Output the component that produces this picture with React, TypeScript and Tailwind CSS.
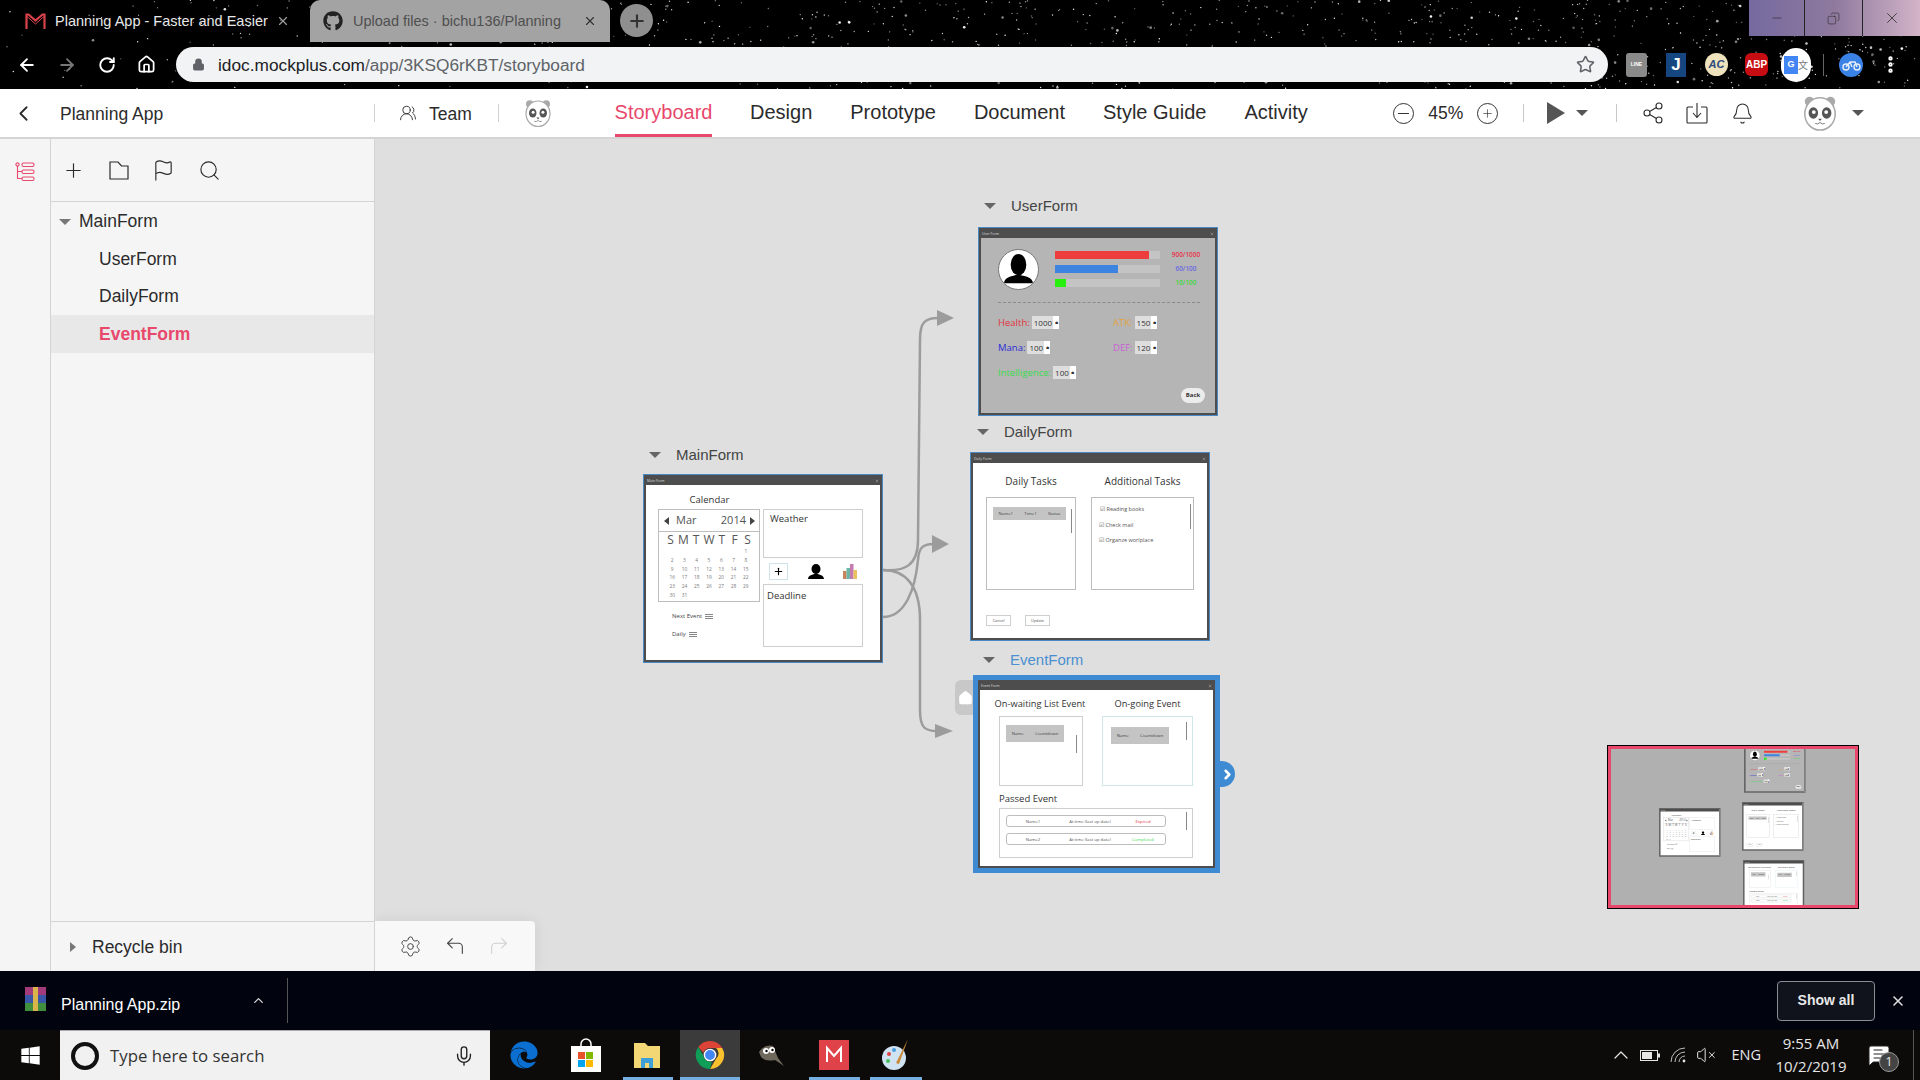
import type { ReactNode } from "react";
import {
  ArrowLeft,
  ArrowRight,
  Bell,
  ChevronLeft,
  ChevronRight,
  ChevronUp,
  CornerUpLeft,
  CornerUpRight,
  EllipsisVertical,
  Flag,
  House,
  Lock,
  MessageSquareText,
  Mic,
  Plus,
  RotateCw,
  Search,
  Settings,
  Share2,
  Star,
  Minus,
  VolumeX,
  X,
  Copy,
  UsersRound,
} from "lucide-react";
import { FaEdge, FaGithub, FaWindows } from "react-icons/fa";

// wallpaper specks behind the browser chrome, seeded so each shot is the same
const stars = (() => {
  let seed = 42;
  const rnd = () => {
    seed = (seed * 16807) % 2147483647;
    return seed / 2147483647;
  };
  return Array.from({ length: 1000 }, () => ({
    x: Math.pow(rnd(), 0.7) * 1920,
    y: rnd() * 89,
    r: rnd() < 0.1 ? 1.3 : 0.7,
    o: 0.35 + rnd() * 0.65,
  }));
})();

const navItems = ["Design", "Prototype", "Document", "Style Guide", "Activity"];
const calendarDays = [
  "", "", "", "", "", "", "1",
  "2", "3", "4", "5", "6", "7", "8",
  "9", "10", "11", "12", "13", "14", "15",
  "16", "17", "18", "19", "20", "21", "22",
  "23", "24", "25", "26", "27", "28", "29",
  "30", "31", "", "", "", "", "",
];

function Panda({ size }: { size: number }) {
  return (
    <svg width={size} height={size} viewBox="0 0 40 40">
      <circle cx="9" cy="8" r="5" fill="#a9a9a9" />
      <circle cx="31" cy="8" r="5" fill="#a9a9a9" />
      <ellipse cx="20" cy="21" rx="16" ry="17" fill="#fff" stroke="#a9a9a9" strokeWidth="1.6" />
      <ellipse cx="13" cy="20" rx="5" ry="6" fill="#555" />
      <ellipse cx="27" cy="20" rx="5" ry="6" fill="#555" />
      <circle cx="13.5" cy="19" r="2" fill="#fff" />
      <circle cx="26.5" cy="19" r="2" fill="#fff" />
      <path d="M18 26h4l-2 2.5z" fill="#555" />
      <path d="M15 31q2.5 1.500 5-1q2.500 2.500 5 1" fill="none" stroke="#777" strokeWidth="1" />
    </svg>
  );
}

function Caret({ className }: { className: string }) {
  return <span className={`block h-0 w-0 border-x-[6px] border-t-[6px] border-x-transparent ${className}`} />;
}

function ChromeLogo({ size }: { size: number }) {
  return (
    <svg width={size} height={size} viewBox="0 0 32 32">
      <path d="M16 1a15 15 0 0 1 13 7.500H16a7.500 7.500 0 0 0-7 5L3.500 7.500A15 15 0 0 1 16 1z" fill="#db4437" />
      <path d="M29 8.500A15 15 0 0 1 16 31l6.500-11a7.500 7.500 0 0 0 0-11.500z" fill="#fbc02d" />
      <path d="M16 31A15 15 0 0 1 3.500 7.500L9 17a7.500 7.500 0 0 0 9 6z" fill="#0f9d58" />
      <circle cx="16" cy="16" r="6" fill="#4285f4" stroke="#fff" strokeWidth="1.500" />
    </svg>
  );
}

function MailLogo() {
  return (
    <svg className="shrink-0" width="21" height="17" viewBox="0 0 21 17" fill="none" stroke="#d8434b" strokeWidth="2.200">
      <path d="M1.500 16V1.500h2l7 6 7-6h2V16" />
      <path d="M1.500 3l9 8 9-8" strokeWidth="1" />
    </svg>
  );
}

function ExtIcon({ children, className }: { children: ReactNode; className: string }) {
  return <span className={`flex shrink-0 items-center justify-center ${className}`}>{children}</span>;
}

function BrowserChrome() {
  return (
    <div className="relative h-[89px] shrink-0 overflow-hidden bg-black">
      <svg className="absolute inset-0" width="1920" height="89">
        {stars.map((s, i) => (
          <circle key={i} cx={s.x} cy={s.y} r={s.r} fill="#fff" opacity={s.o} />
        ))}
      </svg>
      <div className="relative flex h-[42px]">
        <div className="flex w-[310px] items-center pl-[25px] pr-[20px] text-[14.500px] text-[#e8e8e8]">
          <MailLogo />
          <span className="ml-[9px] flex-1 truncate pt-[1px]">Planning App - Faster and Easier</span>
          <X className="ml-[6px] h-[14px] w-[14px] text-[#9a9a9a]" />
        </div>
        <div className="flex w-[300px] items-center rounded-t-[10px] bg-[#a3a3a3] pl-[13px] pr-[13px] text-[14.500px] text-[#4f4f4f]">
          <FaGithub className="h-[20px] w-[20px] shrink-0 text-[#222]" />
          <span className="ml-[10px] flex-1 truncate pt-[1px]">Upload files · bichu136/Planning</span>
          <X className="ml-[4px] h-[14px] w-[14px] text-[#333]" />
        </div>
        <div className="ml-[10px] mt-[4px] flex h-[33px] w-[33px] items-center justify-center rounded-full bg-[#8f8f8f]">
          <Plus className="h-[20px] w-[20px] text-[#333]" strokeWidth={2.5} />
        </div>
        <div className="ml-auto flex h-[36px] w-[171px] bg-gradient-to-r from-[#75699f] via-[#8f7a9e] to-[#d3b4c8] text-[#222]">
          <div className="flex w-[56px] items-center justify-center border-r border-[#222]">
            <Minus className="h-[14px] w-[14px]" strokeWidth={1} />
          </div>
          <div className="flex w-[58px] items-center justify-center border-r border-[#222]">
            <Copy className="h-[13px] w-[13px] -scale-x-100" strokeWidth={1} />
          </div>
          <div className="flex flex-1 items-center justify-center">
            <X className="h-[18px] w-[18px]" strokeWidth={1} />
          </div>
        </div>
      </div>
      <div className="relative mt-[5px] flex h-[35px] items-center">
        <div className="flex w-[176px] items-center pl-[17px] text-white">
          <ArrowLeft className="h-[20px] w-[20px]" strokeWidth={2.2} />
          <ArrowRight className="ml-[20px] h-[20px] w-[20px] text-[#777]" strokeWidth={2.2} />
          <RotateCw className="ml-[21px] h-[18px] w-[18px]" strokeWidth={2.5} />
          <House className="ml-[21px] h-[19px] w-[19px]" strokeWidth={2.2} />
        </div>
        <div className="flex h-[35px] w-[1432px] items-center rounded-full bg-[#f1f3f4] pl-[16px] pr-[13px] text-[17.300px] text-[#5f6368]">
          <Lock className="h-[13px] w-[13px] fill-[#5f6368]" />
          <span className="ml-[13px] pt-[2px]">
            <span className="text-[#202124]">idoc.mockplus.com</span>/app/3KSQ6rKBT/storyboard
          </span>
          <Star className="ml-auto h-[19px] w-[19px] text-[#5f6368]" strokeWidth={2} />
        </div>
        <div className="ml-[18px] flex items-center">
          <ExtIcon className="h-[24px] w-[21px] rounded-[3px] bg-[#8a8a8a] text-[5px] font-bold text-white">LINE</ExtIcon>
          <ExtIcon className="ml-[19px] h-[24px] w-[20px] bg-[#15467f] text-[17px] font-bold text-white">J</ExtIcon>
          <ExtIcon className="ml-[19px] h-[23px] w-[23px] rounded-full bg-[#efe3bd] text-[11px] font-bold italic text-[#2c4a7a]">AC</ExtIcon>
          <ExtIcon className="ml-[17px] h-[23px] w-[23px] rounded-[6px] bg-[#c70d12] text-[10px] font-bold text-white">ABP</ExtIcon>
          <ExtIcon className="ml-[13px] h-[34px] w-[30px] rounded-full bg-white">
            <span className="flex h-[18px] w-[14px] items-center justify-center bg-[#4285f4] text-[9px] font-bold text-white">G</span>
            <span className="font-['Noto_Sans_CJK_SC',sans-serif] text-[10px] text-[#777]">文</span>
          </ExtIcon>
          <span className="ml-[12px] h-[22px] w-px bg-[#666]" />
          <ExtIcon className="ml-[15px] h-[24px] w-[24px] rounded-full bg-[#3b82e6] text-[#eee]">
            <svg width="19" height="12" viewBox="0 0 19 12" fill="none" stroke="#e8eef8" strokeWidth="1.400">
              <circle cx="4" cy="8" r="3" />
              <circle cx="15" cy="8" r="3" />
              <path d="M4 8l4-5h5l2 5M8 3l2 5" />
            </svg>
          </ExtIcon>
          <EllipsisVertical className="ml-[17px] h-[21px] w-[21px] text-white" strokeWidth={3} />
        </div>
      </div>
    </div>
  );
}

function AppHeader() {
  return (
    <div className="flex h-[50px] shrink-0 items-center border-b-2 border-[#d4d4d4] bg-white text-[#2b2b2b]">
      <ChevronLeft className="ml-[11px] h-[25px] w-[25px]" strokeWidth={1.700} />
      <span className="ml-[24px] w-[314px] pt-[2px] text-[17.500px]">Planning App</span>
      <span className="h-[18px] w-px bg-[#d0d0d0]" />
      <UsersRound className="ml-[24px] h-[18px] w-[18px]" strokeWidth={1.200} />
      <span className="ml-[12px] w-[69px] pt-[2px] text-[17.500px]">Team</span>
      <span className="h-[18px] w-px bg-[#d0d0d0]" />
      <span className="ml-[24px]">
        <Panda size={30} />
      </span>
      <div className="ml-[62px] flex h-full items-stretch text-[20px]">
        <span className="flex w-[97px] items-center justify-center whitespace-nowrap border-b-[3px] border-[#e8486c] pt-[1px] text-[#e8486c]">
          Storyboard
        </span>
        {navItems.map((item) => (
          <span key={item} className="ml-[38px] flex items-center pb-[2px]">
            {item}
          </span>
        ))}
      </div>
      <span className="ml-[85px] flex h-[21px] w-[21px] items-center justify-center rounded-full border border-[#333]">
        <span className="h-px w-[11px] bg-[#333]" />
      </span>
      <span className="ml-[11px] w-[42px] text-center text-[17.500px]">45%</span>
      <span className="ml-[10px] flex h-[21px] w-[21px] items-center justify-center rounded-full border border-[#333]">
        <Plus className="h-[13px] w-[13px]" strokeWidth={1.200} />
      </span>
      <span className="ml-[25px] h-[18px] w-px bg-[#c8c8c8]" />
      <span className="ml-[23px] block h-0 w-0 border-y-[11px] border-l-[18px] border-y-transparent border-l-[#555]" />
      <Caret className="ml-[11px] border-t-[#555]" />
      <span className="ml-[28px] h-[18px] w-px bg-[#c8c8c8]" />
      <Share2 className="ml-[24px] h-[24px] w-[24px]" strokeWidth={1.100} />
      <svg className="ml-[21px]" width="22" height="24" viewBox="0 0 22 24" fill="none" stroke="#2b2b2b" strokeWidth="1.100">
        <path d="M7 6H2a1 1 0 0 0-1 1v14a1 1 0 0 0 1 1h18a1 1 0 0 0 1-1V7a1 1 0 0 0-1-1h-5" />
        <path d="M11 2v14M7 12l4 4.500 4-4.500" />
      </svg>
      <Bell className="ml-[23px] h-[23px] w-[23px]" strokeWidth={1.100} />
      <span className="ml-[47px]">
        <Panda size={38} />
      </span>
      <Caret className="ml-[13px] border-t-[#555]" />
    </div>
  );
}

function Sidebar() {
  return (
    <>
      <div className="w-[51px] shrink-0 border-r border-[#d4d4d4] bg-[#f5f5f5] pl-[15px] pt-[23px]">
        <svg width="20" height="20" viewBox="0 0 20 20" fill="none" stroke="#e8486c" strokeWidth="1.100">
          <circle cx="2.500" cy="2.500" r="1.600" />
          <rect x="7" y="1" width="12" height="3.500" rx="1.500" />
          <rect x="7" y="8" width="12" height="3.500" rx="1.500" />
          <rect x="7" y="15" width="12" height="3.500" rx="1.500" />
          <path d="M2.500 4v12.500H7M2.500 9.500H7" />
        </svg>
      </div>
      <div className="flex w-[324px] shrink-0 flex-col border-r border-[#d4d4d4] bg-[#f5f5f5] text-[#2b2b2b]">
        <div className="flex h-[63px] shrink-0 items-center gap-[23px] border-b border-[#d4d4d4] pl-[11px]">
          <Plus className="h-[23px] w-[23px]" strokeWidth={1.200} />
          <svg className="ml-[1px]" width="20" height="20" viewBox="0 0 20 20" fill="none" stroke="#2b2b2b" strokeWidth="1.200">
            <path d="M1 2h8l3.500 4H19v13H1z" />
          </svg>
          <Flag className="h-[23px] w-[23px]" strokeWidth={1.200} />
          <Search className="h-[23px] w-[23px]" strokeWidth={1.200} />
        </div>
        <div className="flex-1 pt-[1px] text-[17.500px]">
          <div className="flex h-[37px] items-center pl-[8px]">
            <Caret className="border-x-[5px] border-t-[6px] border-t-[#777]" />
            <span className="ml-[8px]">MainForm</span>
          </div>
          <div className="flex h-[38px] items-center pl-[48px]">UserForm</div>
          <div className="flex h-[37px] items-center pl-[48px]">DailyForm</div>
          <div className="flex h-[38px] items-center bg-[#e8e8e8] pl-[48px] font-bold text-[#e8486c]">EventForm</div>
        </div>
        <div className="flex h-[50px] shrink-0 items-center border-t border-[#d4d4d4] pl-[19px] pt-[1px] text-[17.500px]">
          <span className="block h-0 w-0 border-y-[5px] border-l-[6px] border-y-transparent border-l-[#777]" />
          <span className="ml-[16px]">Recycle bin</span>
        </div>
      </div>
    </>
  );
}

function FormWindow({
  title,
  bodyClass,
  width,
  children,
}: {
  title: string;
  bodyClass: string;
  width: string;
  children: ReactNode;
}) {
  return (
    <div className={`flex flex-col bg-[#4d4d4d] p-[2px] font-['Open_Sans',sans-serif] ${width}`}>
      <div className="flex h-[8px] shrink-0 items-center justify-between px-[1px] text-[3.500px] leading-none text-[#ddd]">
        <span>{title}</span>
        <X className="h-[4px] w-[4px]" />
      </div>
      <div className={`min-h-0 flex-1 ${bodyClass}`}>{children}</div>
    </div>
  );
}

function ScrollThumb({ className }: { className: string }) {
  return <span className={`absolute w-[1px] bg-[#888] ${className}`} />;
}

function Bars() {
  return (
    <span className="flex w-[8px] flex-col gap-[1px]">
      <span className="h-px bg-[#888]" />
      <span className="h-px bg-[#888]" />
      <span className="h-px bg-[#888]" />
    </span>
  );
}

function MainFormWindow() {
  return (
    <FormWindow title="Main Form" bodyClass="flex bg-white pl-[12px] pt-[9px] text-[#333]" width="h-[187px] w-[238px]">
      <div className="w-[102px]">
        <div className="h-[15px] pl-[1px] text-center text-[9.500px] leading-[12px]">Calendar</div>
        <div className="h-[93px] border border-[#bdbdbd]">
          <div className="flex h-[22px] items-center justify-between border-b border-[#bdbdbd] pl-[5px] pr-[4px] text-[11px] text-[#555]">
            <span className="flex items-center gap-[7px]">
              <span className="h-0 w-0 border-y-[4px] border-r-[5px] border-y-transparent border-r-[#444]" />
              Mar
            </span>
            <span className="flex items-center gap-[4px]">
              2014
              <span className="h-0 w-0 border-y-[4px] border-l-[5px] border-y-transparent border-l-[#444]" />
            </span>
          </div>
          <div className="grid grid-cols-7 px-[5px] text-center text-[12px] leading-[15px] text-[#555]">
            {["S", "M", "T", "W", "T", "F", "S"].map((d, i) => (
              <span key={i}>{d}</span>
            ))}
          </div>
          <div className="grid grid-cols-7 px-[7px] text-center text-[4.800px] leading-[8.800px] text-[#777]">
            {calendarDays.map((d, i) => (
              <span key={i}>{d || "\u00a0"}</span>
            ))}
          </div>
        </div>
        <div className="mt-[10px] flex items-center gap-[3px] pl-[14px] text-[6px] leading-[8px] text-[#444]">
          Next Event <Bars />
        </div>
        <div className="mt-[10px] flex items-center gap-[3px] pl-[14px] text-[6px] leading-[8px] text-[#444]">
          Daily <Bars />
        </div>
      </div>
      <div className="ml-[3px] mt-[15px] w-[100px]">
        <div className="h-[49px] border border-[#cfcfcf] px-[6px] pt-[2px] text-[9.500px]">Weather</div>
        <div className="flex h-[26px] items-center pl-[6px]">
          <span className="flex h-[17px] w-[19px] items-center justify-center border border-[#cfe3ea]">
            <Plus className="h-[11px] w-[11px] text-black" strokeWidth={2.500} />
          </span>
          <span className="ml-[19px]">
            <svg width="18" height="15" viewBox="0 0 18 15" fill="#000">
              <ellipse cx="9" cy="5" rx="4.500" ry="5" />
              <path d="M1 15c0-4 5-4 8-6 3 2 8 2 8 6z" />
            </svg>
          </span>
          <span className="ml-[17px]">
            <svg width="17" height="17" viewBox="0 0 17 17">
              <rect x="1" y="8" width="3.500" height="8" fill="#c9825c" />
              <rect x="4.500" y="5" width="3.500" height="11" fill="#6db5a5" />
              <rect x="8" y="1" width="3.500" height="15" fill="#c57bb0" />
              <rect x="11.500" y="7" width="3.500" height="9" fill="#e8c25e" />
            </svg>
          </span>
        </div>
        <div className="h-[63px] border border-[#cfcfcf] px-[3px] pt-[4px] text-[9.500px]">Deadline</div>
      </div>
    </FormWindow>
  );
}

function StatBar({ value, color, label, labelClass }: { value: string; color: string; label: string; labelClass: string }) {
  return (
    <div className="flex h-[14px] items-center">
      <div className="h-[8px] w-[105px] bg-[#c4c4c4]">
        <div className={`h-full ${value} ${color}`} />
      </div>
      <span className={`w-[50px] whitespace-nowrap pl-[2px] text-center text-[6.500px] font-semibold ${labelClass}`}>{label}</span>
    </div>
  );
}

function Spin({ value }: { value: string }) {
  return (
    <span className="ml-[2px] flex h-[13px] items-center bg-[#dedede] pl-[2px] text-[8px] text-[#333]">
      {value}
      <span className="ml-[1px] flex h-full w-[6px] items-center justify-center bg-white text-[4px]">≑</span>
    </span>
  );
}

function UserFormWindow() {
  return (
    <FormWindow title="User Form" bodyClass="bg-[#b5b5b5] pl-[17px] pt-[11px]" width="h-[187px] w-[238px]">
      <div className="flex">
        <div className="h-[41px] w-[41px] shrink-0 overflow-hidden rounded-full border border-[#777] bg-white">
          <svg viewBox="0 0 40 40" fill="#000">
            <ellipse cx="20" cy="15" rx="8" ry="11" />
            <path d="M5 34c1-7 9-7 15-9 6 2 14 2 15 9z" />
          </svg>
        </div>
        <div className="-mt-[1px] ml-[16px] flex flex-col">
          <StatBar value="w-[94px]" color="bg-[#ee3d3d]" label="900/1000" labelClass="text-[#e8334a]" />
          <StatBar value="w-[63px]" color="bg-[#3d84e0]" label="60/100" labelClass="text-[#6a6ae0]" />
          <StatBar value="w-[11px]" color="bg-[#27f00f]" label="10/100" labelClass="text-[#3fd93f]" />
        </div>
      </div>
      <div className="mt-[12px] w-[202px] border-t border-dashed border-[#8a8a8a]" />
      <div className="mt-[13px] grid grid-cols-[115px_1fr] gap-y-[12px] text-[9.500px] leading-[13px]">
        <div className="flex items-center text-[#e2323c]">Health:<Spin value="1000" /></div>
        <div className="flex items-center text-[#e3a33b]">ATK:<Spin value="150" /></div>
        <div className="flex items-center text-[#2b2bd9]">Mana:<Spin value="100" /></div>
        <div className="flex items-center text-[#c95fd9]">DEF:<Spin value="120" /></div>
        <div className="flex items-center text-[#3bdc4d]">Intelligence:<Spin value="100" /></div>
      </div>
      <div className="ml-[183px] mt-[9px] flex h-[15px] w-[24px] items-center justify-center rounded-full bg-[#ececec] text-[6px] font-bold text-[#333]">
        Back
      </div>
    </FormWindow>
  );
}

function DailyFormWindow() {
  return (
    <FormWindow title="Daily Form" bodyClass="bg-white px-[13px] pt-[11px] text-[#333]" width="h-[187px] w-[238px]">
      <div className="flex">
        <div className="w-[91px]">
          <div className="h-[23px] text-center text-[10px]">Daily Tasks</div>
          <div className="relative h-[93px] border border-[#bdbdbd] pl-[6px] pt-[9px]">
            <div className="flex h-[13px] w-[73px] items-center justify-around bg-[#c4c4c4] text-[4.300px] text-[#444]">
              <span>Name1</span>
              <span>Time1</span>
              <span>Status</span>
            </div>
            <ScrollThumb className="left-[84px] top-[11px] h-[24px]" />
          </div>
        </div>
        <div className="ml-[15px] w-[104px]">
          <div className="h-[23px] text-center text-[10px]">Additional Tasks</div>
          <div className="relative h-[93px] border border-[#bdbdbd] pl-[7px] pt-[7px] text-[5.500px] text-[#555]">
            <div className="h-[16px] pl-[1px]">☑ Reading books</div>
            <div className="h-[15px]">☑ Check mail</div>
            <div>☑ Organze worlplace</div>
            <ScrollThumb className="left-[98px] top-[6px] h-[25px]" />
          </div>
        </div>
      </div>
      <div className="mt-[25px] flex gap-[14px] text-[3.800px] text-[#555]">
        <span className="flex h-[11px] w-[25px] items-center justify-center border border-[#cfcfcf]">Cancel</span>
        <span className="flex h-[11px] w-[25px] items-center justify-center border border-[#cfcfcf]">Update</span>
      </div>
    </FormWindow>
  );
}

function EventRow({ name, status, color }: { name: string; status: string; color: string }) {
  return (
    <div className="flex h-[12px] w-[160px] items-center rounded-[3px] border border-[#bdbdbd] text-[4.300px] text-[#555]">
      <span className="w-[52px] text-center">{name}</span>
      <span className="w-[62px] whitespace-nowrap text-center">At time (last up date)</span>
      <span className={`flex-1 text-center ${color}`}>{status}</span>
    </div>
  );
}

function EventFormWindow() {
  return (
    <FormWindow title="Event Form" bodyClass="bg-white pl-[19px] pt-[8px] text-[#333]" width="h-[188px] w-[237px]">
      <div className="flex">
        <div className="w-[84px]">
          <div className="-ml-[9px] h-[18px] w-[100px] whitespace-nowrap text-center text-[9.300px] leading-[12px]">On-waiting List Event</div>
          <div className="relative h-[70px] border border-[#cfcfcf] pl-[6px] pt-[8px]">
            <div className="flex h-[17px] w-[58px] items-center justify-around bg-[#c4c4c4] text-[4.300px] text-[#444]">
              <span>Name</span>
              <span>Countdown</span>
            </div>
            <ScrollThumb className="left-[76px] top-[18px] h-[18px]" />
          </div>
        </div>
        <div className="ml-[19px] w-[91px]">
          <div className="h-[18px] whitespace-nowrap text-center text-[9.300px] leading-[12px]">On-going Event</div>
          <div className="relative h-[70px] border border-[#cfe6ea] pl-[8px] pt-[10px]">
            <div className="flex h-[17px] w-[58px] items-center justify-around bg-[#c4c4c4] text-[4.300px] text-[#444]">
              <span>Name</span>
              <span>Countdown</span>
            </div>
            <ScrollThumb className="left-[83px] top-[5px] h-[18px]" />
          </div>
        </div>
      </div>
      <div className="mt-[7px] h-[15px] text-[9.500px] leading-[12px]">Passed Event</div>
      <div className="relative flex h-[50px] w-[194px] flex-col gap-[6px] border border-[#cfcfcf] pl-[6px] pt-[6px]">
        <EventRow name="Name1" status="Expired" color="text-[#e2323c]" />
        <EventRow name="Name2" status="Completed" color="text-[#3bdc4d]" />
        <ScrollThumb className="left-[186px] top-[3px] h-[18px]" />
      </div>
    </FormWindow>
  );
}

function NodeLabel({ text, className, blue }: { text: string; className: string; blue?: boolean }) {
  return (
    <div className={`flex h-[20px] items-center text-[15px] ${blue ? "text-[#4a90d0]" : "text-[#444]"} ${className}`}>
      <Caret className="border-t-[#666]" />
      <span className="ml-[15px]">{text}</span>
    </div>
  );
}

function Canvas() {
  return (
    <div className="relative flex-1 overflow-hidden bg-[#dfdfdf]">
      <svg className="absolute inset-0" width="1545" height="832" viewBox="375 139 1545 832" fill="none" stroke="#9c9c9c" strokeWidth="2.500">
        <path d="M883 570C905 572 918 565 918 540L920 340C920 322 925 318 938 318" />
        <path d="M883 617C905 617 915 590 918 560C919 548 922 544 934 544" />
        <path d="M883 570C905 570 920 585 920 620L920 710C920 728 925 731 937 731" />
        <path d="M937 310l17 8-17 8zM932 535l17 9-17 9zM935 724l18 7-18 7z" fill="#9c9c9c" stroke="none" />
      </svg>

      <div className="absolute left-[603px] top-[57px]">
        <NodeLabel text="UserForm" className="mb-[11px] pl-[6px]" />
        <div className="border border-[#4a8ac4]">
          <UserFormWindow />
        </div>
      </div>
      <div className="absolute left-[595px] top-[283px]">
        <NodeLabel text="DailyForm" className="mb-[10px] pl-[7px]" />
        <div className="border border-[#4a8ac4]">
          <DailyFormWindow />
        </div>
      </div>
      <div className="absolute left-[268px] top-[306px]">
        <NodeLabel text="MainForm" className="mb-[9px] pl-[6px]" />
        <div className="border border-[#4a8ac4]">
          <MainFormWindow />
        </div>
      </div>
      <div className="absolute left-[598px] top-[511px]">
        <NodeLabel text="EventForm" blue className="mb-[5px] pl-[10px]" />
        <div className="border-[5px] border-[#3f8bd3]">
          <EventFormWindow />
        </div>
        <span className="absolute -left-[18px] top-[30px] flex h-[35px] w-[18px] items-center justify-center rounded-l-[6px] bg-[#c8c8c8]">
          <House className="ml-[3px] h-[16px] w-[16px] fill-white text-white" />
        </span>
        <span className="absolute -right-[15px] top-[111px] flex h-[26px] w-[15px] items-center justify-center rounded-r-full bg-[#3f8bd3]">
          <ChevronRight className="h-[15px] w-[15px] text-white" strokeWidth={4} />
        </span>
      </div>

      {/* minimap */}
      <div className="absolute left-[1232px] top-[606px] h-[164px] w-[252px] border border-black bg-[#e8486c] p-[3px]">
        <div className="relative h-full w-full overflow-hidden bg-[#b0b0b0]">
          <div className="absolute left-[134px] top-[-4px] origin-top-left scale-[0.25] ring-[4px] ring-[#666]"><UserFormWindow /></div>
          <div className="absolute left-[132px] top-[54px] origin-top-left scale-[0.25] ring-[4px] ring-[#666]"><DailyFormWindow /></div>
          <div className="absolute left-[49px] top-[60px] origin-top-left scale-[0.25] ring-[4px] ring-[#666]"><MainFormWindow /></div>
          <div className="absolute left-[133px] top-[112px] origin-top-left scale-[0.25] ring-[4px] ring-[#666]"><EventFormWindow /></div>
        </div>
      </div>

      {/* floating toolbar */}
      <div className="absolute bottom-0 left-0 flex h-[50px] w-[160px] items-center gap-[22px] rounded-tr-[4px] bg-[#f8f8f8] pl-[24px] text-[#444] shadow-[0_0_14px_rgba(0,0,0,0.08)]">
        <Settings className="h-[23px] w-[23px]" strokeWidth={1} />
        <CornerUpLeft className="h-[22px] w-[22px]" strokeWidth={1.200} />
        <CornerUpRight className="h-[22px] w-[22px] text-[#d0d0d0]" strokeWidth={1.200} />
      </div>
    </div>
  );
}

function DownloadBar() {
  return (
    <div className="flex h-[59px] shrink-0 items-center bg-[#01040f] text-white">
      <svg className="mb-[3px] ml-[25px]" width="21" height="24" viewBox="0 0 21 24">
        <rect x="0" y="0" width="21" height="8" fill="#a33a7a" />
        <rect x="0" y="8" width="21" height="8" fill="#3a56a8" />
        <rect x="0" y="16" width="21" height="8" fill="#3f8f3f" />
        <rect x="8" y="0" width="5" height="24" fill="#d9b44a" />
      </svg>
      <span className="ml-[15px] w-[190px] pt-[8px] text-[16px]">Planning App.zip</span>
      <ChevronUp className="h-[15px] w-[15px] text-[#ddd]" strokeWidth={2} />
      <span className="ml-[21px] h-[45px] w-px bg-[#555]" />
      <span className="ml-auto flex h-[40px] w-[98px] items-center justify-center rounded-[4px] border border-[#8a8d94] bg-[#10131c] text-[14px] font-bold text-[#e8e8e8]">
        Show all
      </span>
      <X className="ml-[15px] mr-[14px] h-[16px] w-[16px] text-[#ddd]" strokeWidth={2.400} />
    </div>
  );
}

function TaskIcon({
  width,
  active,
  line,
  children,
}: {
  width: string;
  active?: boolean;
  line?: string;
  children: ReactNode;
}) {
  return (
    <div className={`relative flex items-center justify-center ${width} ${active ? "bg-[#3b3b3b]" : ""}`}>
      {children}
      {line && <span className={`absolute bottom-0 h-[3px] bg-[#76b0e2] ${line}`} />}
    </div>
  );
}

function TaskBar() {
  return (
    <div className="flex h-[50px] shrink-0 items-stretch bg-[#0d0b0a] font-['Open_Sans',sans-serif] text-white">
      <div className="flex w-[60px] items-center justify-center">
        <FaWindows className="h-[21px] w-[21px]" />
      </div>
      <div className="flex w-[430px] items-center border-t border-[#aaa] bg-[#f1f1f1] pl-[11px] text-[16.800px] text-[#333]">
        <span className="h-[28px] w-[28px] rounded-full border-[4px] border-[#111]" />
        <span className="ml-[11px] flex-1">Type here to search</span>
        <Mic className="mr-[15px] h-[22px] w-[22px] text-[#222]" strokeWidth={1.500} />
      </div>
      <div className="flex items-stretch">
        <TaskIcon width="w-[68px]"><FaEdge className="h-[28px] w-[28px] text-[#0a6fd1]" /></TaskIcon>
        <TaskIcon width="w-[56px]">
          <svg width="30" height="34" viewBox="0 0 30 34">
            <path d="M10 9V6a5 5 0 0 1 10 0v3" fill="none" stroke="#fff" strokeWidth="1.500" />
            <rect x="0" y="8" width="30" height="26" fill="#fff" />
            <rect x="7" y="14" width="7" height="7" fill="#e8532b" />
            <rect x="15" y="14" width="7" height="7" fill="#7fba00" />
            <rect x="7" y="22" width="7" height="7" fill="#00a4ef" />
            <rect x="15" y="22" width="7" height="7" fill="#ffb900" />
          </svg>
        </TaskIcon>
        <TaskIcon width="w-[66px]" line="left-[9px] w-[50px]">
          <svg width="28" height="28" viewBox="0 0 28 28">
            <path d="M1 2h11l3 3h12v22H1z" fill="#f3d774" />
            <path d="M8 27v-10h12v10h-4v-5h-4v5z" fill="#3f9fd8" />
          </svg>
        </TaskIcon>
        <TaskIcon width="w-[60px]" active line="left-0 w-[60px]">
          <ChromeLogo size={30} />
        </TaskIcon>
        <TaskIcon width="w-[62px]">
          <svg width="30" height="26" viewBox="0 0 30 26">
            <path d="M3 10q5-8 14-6l5 12 6 8-9-6q-10 2-14-3z" fill="#6d675c" />
            <circle cx="10" cy="9" r="3" fill="#fff" />
            <circle cx="16" cy="8" r="3" fill="#fff" />
            <circle cx="10.500" cy="9" r="1.200" fill="#000" />
            <circle cx="16.500" cy="8" r="1.200" fill="#000" />
          </svg>
        </TaskIcon>
        <TaskIcon width="w-[64px]" line="left-[7px] w-[51px]">
          <span className="flex h-[30px] w-[30px] items-center justify-center bg-[#e0424a]">
            <svg width="20" height="20" viewBox="0 0 20 20" fill="none" stroke="#fff" strokeWidth="2">
              <path d="M3 17V3l7 8 7-8v14" />
            </svg>
          </span>
        </TaskIcon>
        <TaskIcon width="w-[60px]" line="left-[4px] w-[52px]">
          <svg width="30" height="34" viewBox="0 0 30 34">
            <ellipse cx="13" cy="20" rx="12" ry="12" fill="#cfe3f2" />
            <circle cx="8" cy="16" r="2" fill="#e04646" />
            <circle cx="13" cy="12" r="2" fill="#4a9de0" />
            <circle cx="7" cy="23" r="2" fill="#46c05a" />
            <path d="M27 1l-9 25-3-1z" fill="#c98a3a" />
          </svg>
        </TaskIcon>
      </div>
      <div className="ml-auto flex items-center text-[#e6e6e6]">
        <ChevronUp className="h-[24px] w-[24px]" strokeWidth={1.200} />
        <svg className="ml-[7px]" width="20" height="11" viewBox="0 0 20 11" fill="none" stroke="#e6e6e6">
          <rect x="0.500" y="0.500" width="17" height="10" />
          <rect x="2" y="2" width="10" height="7" fill="#e6e6e6" stroke="none" />
          <rect x="18" y="3.500" width="2" height="4" fill="#e6e6e6" stroke="none" />
        </svg>
        <svg className="ml-[10px]" width="16" height="16" viewBox="0 0 16 16" fill="none" stroke="#bdbdbd" strokeWidth="1">
          <path d="M1 15A14 14 0 0 1 15 1M5 15A10 10 0 0 1 15 5M9 15a6 6 0 0 1 6-6" />
          <circle cx="14" cy="14" r="1.400" fill="#e6e6e6" stroke="none" />
        </svg>
        <VolumeX className="ml-[10px] h-[20px] w-[20px]" strokeWidth={1.200} />
        <span className="ml-[15px] text-[14.500px]">ENG</span>
        <div className="ml-[12px] w-[76px] text-center text-[15px] leading-[23px]">
          <div>9:55 AM</div>
          <div>10/2/2019</div>
        </div>
        <div className="relative ml-[18px] mr-[22px]">
          <MessageSquareText className="h-[24px] w-[24px] fill-white text-[#222]" strokeWidth={1} />
          <span className="absolute -bottom-[5px] -right-[8px] flex h-[20px] w-[20px] items-center justify-center rounded-full border border-[#999] bg-[#444] text-[13px]">
            1
          </span>
        </div>
        <span className="mr-[6px] h-full w-px bg-[#555]" />
      </div>
    </div>
  );
}

export default function App() {
  return (
    <div className="flex h-[1080px] w-[1920px] flex-col overflow-hidden font-['Liberation_Sans',Arial,sans-serif]">
      <BrowserChrome />
      <AppHeader />
      <div className="flex min-h-0 flex-1">
        <Sidebar />
        <Canvas />
      </div>
      <DownloadBar />
      <TaskBar />
    </div>
  );
}
